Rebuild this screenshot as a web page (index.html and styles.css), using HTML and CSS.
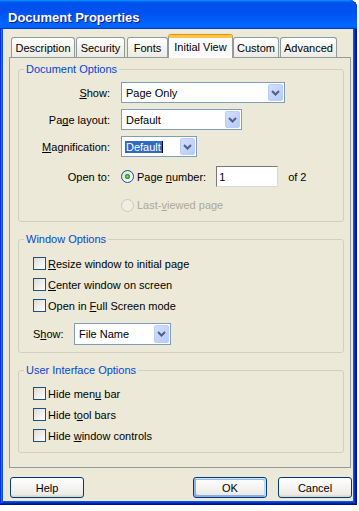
FILE: index.html
```html
<!DOCTYPE html>
<html lang="en">
<head>
    <meta charset="UTF-8">
    <meta name="viewport" content="width=device-width, initial-scale=1.0">
    <title>Document Properties</title>
    <link rel="stylesheet" href="styles.css">
</head>
<body>
    <div class="window">
        <div class="titlebar">Document Properties</div>

        <div class="client">
            <div class="tabs">
                <div class="tab tab-desc">Description</div>
                <div class="tab tab-security">Security</div>
                <div class="tab tab-fonts">Fonts</div>
                <div class="tab tab-view active">Initial View</div>
                <div class="tab tab-custom">Custom</div>
                <div class="tab tab-advanced">Advanced</div>
            </div>

            <div class="panel">
                <fieldset class="group group-doc">
                    <legend>Document Options</legend>

                    <div class="field-row">
                        <span class="field-label"><u>S</u>how:</span>
                        <div class="combo combo-show">
                            <span class="combo-text">Page Only</span>
                            <span class="combo-btn"><svg width="9" height="6" viewBox="0 0 9 6"><path d="M1 1l3.5 3.5L8 1" fill="none" stroke="#4d6185" stroke-width="2"/></svg></span>
                        </div>
                    </div>

                    <div class="field-row">
                        <span class="field-label">Pa<u>g</u>e layout:</span>
                        <div class="combo combo-layout">
                            <span class="combo-text">Default</span>
                            <span class="combo-btn"><svg width="9" height="6" viewBox="0 0 9 6"><path d="M1 1l3.5 3.5L8 1" fill="none" stroke="#4d6185" stroke-width="2"/></svg></span>
                        </div>
                    </div>

                    <div class="field-row">
                        <span class="field-label"><u>M</u>agnification:</span>
                        <div class="combo combo-mag">
                            <span class="combo-text"><span class="selected-text">Default</span></span>
                            <span class="combo-btn"><svg width="9" height="6" viewBox="0 0 9 6"><path d="M1 1l3.5 3.5L8 1" fill="none" stroke="#4d6185" stroke-width="2"/></svg></span>
                        </div>
                    </div>

                    <div class="field-row row-open">
                        <span class="field-label">Open to:</span>
                        <span class="radio radio-checked"></span>
                        <span class="radio-label">Page <u>n</u>umber:</span>
                        <input class="textbox" type="text" value="1">
                        <span class="page-count">of 2</span>
                    </div>

                    <div class="field-row row-last">
                        <span class="field-label"></span>
                        <span class="radio radio-disabled"></span>
                        <span class="radio-label disabled">Last-<u>v</u>iewed page</span>
                    </div>
                </fieldset>

                <fieldset class="group group-window">
                    <legend>Window Options</legend>

                    <div class="check-row"><span class="checkbox"></span><span><u>R</u>esize window to initial page</span></div>
                    <div class="check-row"><span class="checkbox"></span><span><u>C</u>enter window on screen</span></div>
                    <div class="check-row"><span class="checkbox"></span><span>Open in <u>F</u>ull Screen mode</span></div>

                    <div class="show-row">
                        <span class="show-label">S<u>h</u>ow:</span>
                        <div class="combo combo-file">
                            <span class="combo-text">File Name</span>
                            <span class="combo-btn"><svg width="9" height="6" viewBox="0 0 9 6"><path d="M1 1l3.5 3.5L8 1" fill="none" stroke="#4d6185" stroke-width="2"/></svg></span>
                        </div>
                    </div>
                </fieldset>

                <fieldset class="group group-ui">
                    <legend>User Interface Options</legend>

                    <div class="check-row"><span class="checkbox"></span><span>Hide men<u>u</u> bar</span></div>
                    <div class="check-row"><span class="checkbox"></span><span>Hide t<u>o</u>ol bars</span></div>
                    <div class="check-row"><span class="checkbox"></span><span>Hide <u>w</u>indow controls</span></div>
                </fieldset>
            </div>

            <div class="buttons">
                <button class="btn">Help</button>
                <span class="spacer"></span>
                <button class="btn btn-default">OK</button>
                <button class="btn">Cancel</button>
            </div>
        </div>
    </div>
</body>
</html>
```

FILE: styles.css
```css
* {
    box-sizing: border-box;
}

body {
    margin: 0;
    background: #fff;
    font-family: "Liberation Sans", Arial, sans-serif;
    font-size: 11px;
    color: #000;
}

u {
    text-decoration-skip-ink: none;
}

/* window frame */
.window {
    width: 357px;
    height: 505px;
    display: flex;
    flex-direction: column;
    border-radius: 0 8px 0 0;
    overflow: hidden;
    background: #0855dd;
    box-shadow: inset -1px -1px #00138c, inset 1px 1px #0831d9,
                inset -2px -2px #001ea0, inset 2px 2px #166aee,
                inset -3px -3px #003bda, inset 3px 3px #0855dd;
}

.titlebar {
    height: 29px;
    flex: none;
    padding: 10px 0 0 8px;
    line-height: 16px;
    background: linear-gradient(180deg, #0997ff, #0053ee 8%, #0050ee 40%, #0066ff 88%, #0066ff 93%, #005bff 95%, #003dd7 96%, #003dd7);
    color: #fff;
    font-size: 13px;
    font-weight: bold;
    text-shadow: 1px 1px #0a1883;
}

.client {
    flex: 1;
    margin: 0 4px 4px 3px;
    background: #ece9d8;
    display: flex;
    flex-direction: column;
}

/* tabs */
.tabs {
    height: 28px;
    flex: none;
    display: flex;
    align-items: flex-end;
    padding-left: 8px;
}

.tab {
    height: 20px;
    display: flex;
    align-items: center;
    justify-content: center;
    border: 1px solid #919b9c;
    border-bottom: none;
    border-radius: 3px 3px 0 0;
    background: linear-gradient(#fff, #f3f2ec 60%, #ecebe6);
    white-space: nowrap;
}

.tab.active {
    height: 23px;
    margin-bottom: -1px;
    padding-bottom: 3px;
    position: relative;
    z-index: 1;
    border-top: 3px solid #ffc73c;
    box-shadow: 0 -1px #e68b2c;
    background: #fcfcfe;
}

.tab-desc { width: 64px; }
.tab-security { width: 49px; margin-left: 1px; }
.tab-fonts { width: 41px; margin-left: 2px; }
.tab-view { width: 65px; }
.tab-custom { width: 46px; }
.tab-advanced { width: 57px; margin-left: 1px; }

.panel {
    margin-left: 6px;
    width: 342px;
    border: 1px solid #919b9c;
    padding: 5px 6px 14px 8px;
}

/* group boxes */
.group {
    margin: 0;
    padding: 0;
    min-inline-size: 0;
    border: 1px solid #d0d0bf;
    border-radius: 3px;
}

.group legend {
    margin-left: 5px;
    padding: 0 2px;
    line-height: 13px;
    color: #0046d5;
}

.group-doc {
    padding: 6px 0 9px;
}

.group-window {
    margin-top: 11px;
    padding: 11px 0 7px;
}

.group-ui {
    margin-top: 11px;
    padding: 10px 0 10px;
}

.field-row {
    height: 21px;
    display: flex;
    align-items: center;
}

.field-row + .field-row {
    margin-top: 6px;
}

.field-row.row-open {
    margin-top: 9px;
}

.field-row.row-last {
    margin-top: 11px;
    height: 14px;
}

.field-label {
    width: 91px;
    margin-right: 11px;
    text-align: right;
    white-space: nowrap;
}

/* combo boxes */
.combo {
    height: 21px;
    display: flex;
    border: 1px solid #7f9db9;
    background: #fff;
    padding: 1px;
}

.combo-show { width: 164px; }
.combo-layout { width: 121px; }
.combo-mag { width: 76px; }
.combo-file { width: 97px; height: 22px; }

.combo-text {
    flex: 1;
    padding-left: 3px;
    display: flex;
    align-items: center;
    white-space: nowrap;
}

.selected-text {
    margin-left: -1px;
    padding: 0 1px;
    line-height: 12px;
    background: #316ac5;
    color: #fff;
    border-right: 1px solid #000;
}

.combo-btn {
    width: 15px;
    display: flex;
    align-items: center;
    justify-content: center;
    border: 1px solid #bacefa;
    border-radius: 2px;
    background: linear-gradient(135deg, #d3defc, #b7cbf8);
}

/* radios, checkboxes, text box */
.radio {
    width: 13px;
    height: 13px;
    flex: none;
    border-radius: 50%;
    border: 1px solid #1c5180;
    background: linear-gradient(135deg, #dcdcd7, #fff);
}

.radio-checked {
    background: radial-gradient(circle, #7be578 0, #21a121 2.2px, transparent 3px), linear-gradient(135deg, #dcdcd7, #fff);
}

.radio-disabled {
    border-color: #cac8bb;
    background: #f1efe4;
}

.radio-label {
    margin-left: 3px;
    white-space: nowrap;
}

.disabled {
    color: #aca899;
}

.textbox {
    width: 62px;
    height: 21px;
    margin: 0 0 0 10px;
    padding: 0 2px;
    border: 1px solid;
    border-color: #7a7a7a #dcdad0 #dcdad0 #7a7a7a;
    background: #fff;
    font: inherit;
    color: #000;
    outline: none;
}

.page-count {
    margin-left: 10px;
}

.check-row {
    height: 13px;
    margin-left: 14px;
    display: flex;
    align-items: center;
    gap: 2px;
    white-space: nowrap;
}

.check-row + .check-row {
    margin-top: 8px;
}

.checkbox {
    width: 13px;
    height: 13px;
    flex: none;
    border: 1px solid #1c5180;
    background: linear-gradient(135deg, #dcdcd7, #fff);
}

.show-row {
    margin: 11px 0 0 14px;
    display: flex;
    align-items: center;
}

.show-label {
    width: 41px;
}

/* dialog buttons */
.buttons {
    margin-top: 9px;
    display: flex;
    padding: 0 1px 0 7px;
    gap: 11px;
}

.spacer {
    flex: 1;
}

.btn {
    width: 74px;
    height: 21px;
    padding: 0;
    border: 1px solid #003c74;
    border-radius: 3px;
    background: linear-gradient(180deg, #fff, #ecebe6 86%, #d6d0c5);
    font: inherit;
    color: #000;
}

.btn-default {
    box-shadow: inset -1px 1px #cee7ff, inset 1px 2px #98b8ea,
                inset -2px 2px #bcd4f6, inset 1px -1px #89ade4,
                inset 2px -2px #89ade4;
}
```
